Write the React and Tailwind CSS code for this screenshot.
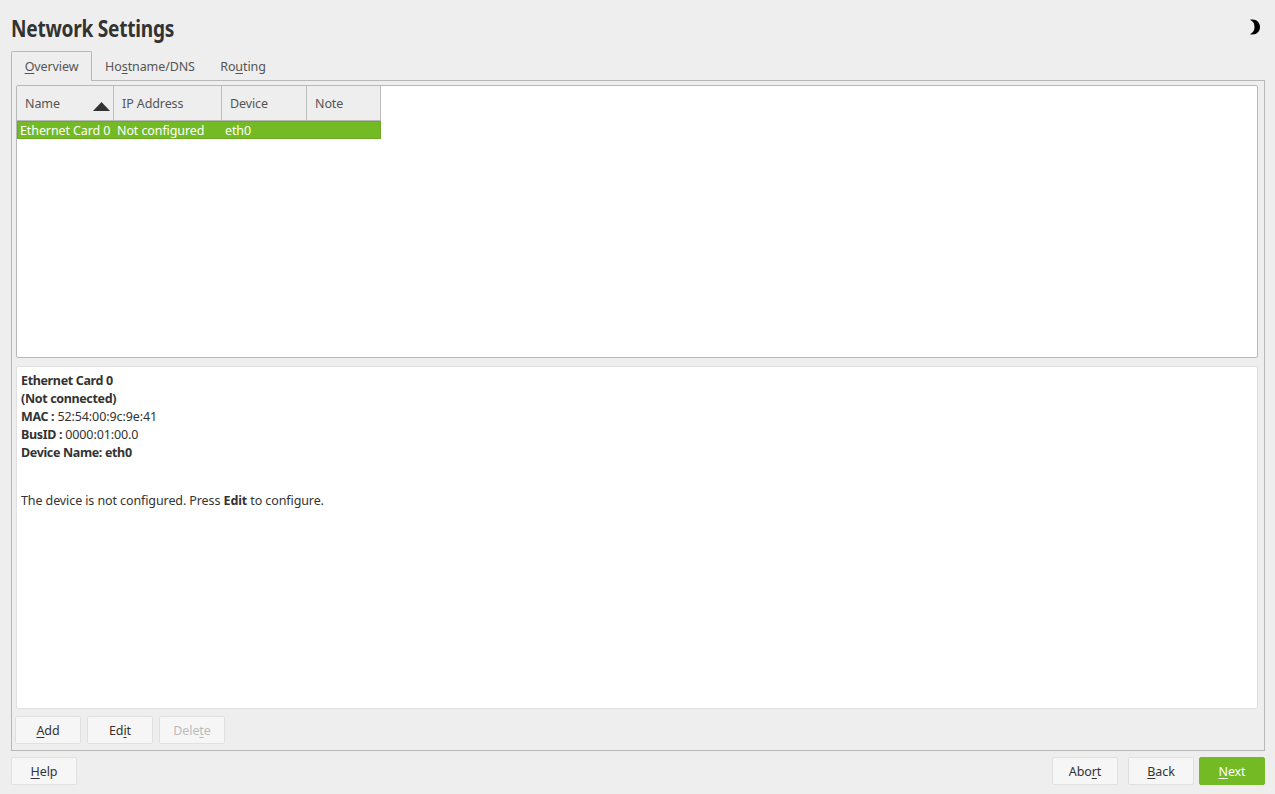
import React from 'react';

const font = { fontFamily: '"Noto Sans", sans-serif' };

function Button({ children, className = '' }) {
    return (
        <button className={`w-[66px] h-[28px] pt-[3px] rounded-[2px] border border-[#e0e0e0] bg-[#f6f6f6] text-[#333] text-[12.5px] tracking-[-0.1px] ${className}`}>
            {children}
        </button>
    );
}

function Hotkey({ children }) {
    return <span className="underline underline-offset-2">{children}</span>;
}

function Strong({ children }) {
    return <b className="tracking-[-0.35px]">{children}</b>;
}

export default function App() {
    return (
        <div style={font} className="w-[1275px] h-[794px] overflow-hidden bg-[#eeeeee] text-[#333] text-[12.5px] tracking-[-0.1px] flex flex-col px-[11px] pr-[10px]">
            <div className="h-[51px] flex items-center justify-between shrink-0">
                <h1 className="text-[23px] font-bold tracking-[-0.3px] mt-[6px] origin-left scale-x-[0.83]">Network Settings</h1>
                <svg width="12" height="16" viewBox="0 0 12 16" className="mr-[4px] mt-[3px]">
                    <path d="M1 0.800 C7 -0.500 11 3 11 8 C11 13 7 16.500 1 15.200 C4.500 13.500 5.500 11 5.500 8 C5.500 5 4.500 2.500 1 0.800 Z" fill="#000" />
                </svg>
            </div>

            <div className="flex h-[30px] shrink-0 text-[#555]">
                <div className="w-[81px] h-[30px] pt-[2px] border border-b-0 border-[#b8b8b8] bg-[#eeeeee] rounded-t-[2px] flex items-center justify-center relative z-10">
                    <span><Hotkey>O</Hotkey>verview</span>
                </div>
                <div className="w-[116px] pt-[2px] flex items-center justify-center">
                    <span>Ho<Hotkey>s</Hotkey>tname/DNS</span>
                </div>
                <div className="w-[70px] pt-[2px] flex items-center justify-center">
                    <span>Ro<Hotkey>u</Hotkey>ting</span>
                </div>
            </div>

            <div className="h-[671px] -mt-px border border-[#b8b8b8] pl-[3px] pr-[6px] pt-[4px] flex flex-col shrink-0">
                <div className="ml-px h-[273px] shrink-0 bg-white border border-[#b8b8b8] rounded-[2px]">
                    <div className="flex h-[35px] w-[364px] text-[#555] border-b border-[#b8b8b8]">
                        <div className="w-[97px] bg-[#eeeeee] border-r border-[#bdbdbd] pl-[8px] pt-[3px] flex items-center justify-between pr-[3px]">
                            <span>Name</span>
                            <svg width="17" height="9" viewBox="0 0 17 9" className="mt-[3px]">
                                <path d="M8.500 0 L17 9 L0 9 Z" fill="#333" />
                            </svg>
                        </div>
                        <div className="w-[108px] bg-[#eeeeee] border-r border-[#bdbdbd] pl-[8px] pt-[3px] flex items-center">IP Address</div>
                        <div className="w-[85px] bg-[#eeeeee] border-r border-[#bdbdbd] pl-[8px] pt-[3px] flex items-center">Device</div>
                        <div className="w-[74px] bg-[#eeeeee] border-r border-[#bdbdbd] pl-[8px] pt-[3px] flex items-center">Note</div>
                    </div>
                    <div className="flex items-center h-[18px] pt-[2px] w-[364px] bg-[#73ba25] border border-[#6aab22] text-white">
                        <div className="w-[96px] pl-[2px] whitespace-nowrap">Ethernet Card 0</div>
                        <div className="w-[108px] pl-[3px] whitespace-nowrap">Not configured</div>
                        <div className="w-[85px] pl-[3px]">eth0</div>
                    </div>
                </div>

                <div className="ml-px mt-[8px] h-[343px] shrink-0 bg-white border border-[#e0e0e0] rounded-[2px] pl-[4px] pt-[5px] leading-[18px]">
                    <div><Strong>Ethernet Card 0</Strong></div>
                    <div><Strong>(Not connected)</Strong></div>
                    <div><Strong>MAC :</Strong> 52:54:00:9c:9e:41</div>
                    <div><Strong>BusID :</Strong> 0000:01:00.0</div>
                    <div><Strong>Device Name: eth0</Strong></div>
                    <div className="mt-[30px]">The device is not configured. Press <b>Edit</b> to configure.</div>
                </div>

                <div className="mt-[7px] flex gap-[6px]">
                    <Button><Hotkey>A</Hotkey>dd</Button>
                    <Button>Ed<Hotkey>i</Hotkey>t</Button>
                    <Button className="text-[#bbbbbb]!">Dele<Hotkey>t</Hotkey>e</Button>
                </div>
            </div>

            <div className="mt-[6px] flex">
                <Button><Hotkey>H</Hotkey>elp</Button>
                <div className="ml-auto flex">
                    <Button>Abo<Hotkey>r</Hotkey>t</Button>
                    <Button className="ml-[10px]"><Hotkey>B</Hotkey>ack</Button>
                    <Button className="ml-[5px] bg-[#73ba25]! border-[#73ba25]! text-white!"><Hotkey>N</Hotkey>ext</Button>
                </div>
            </div>
        </div>
    );
}
